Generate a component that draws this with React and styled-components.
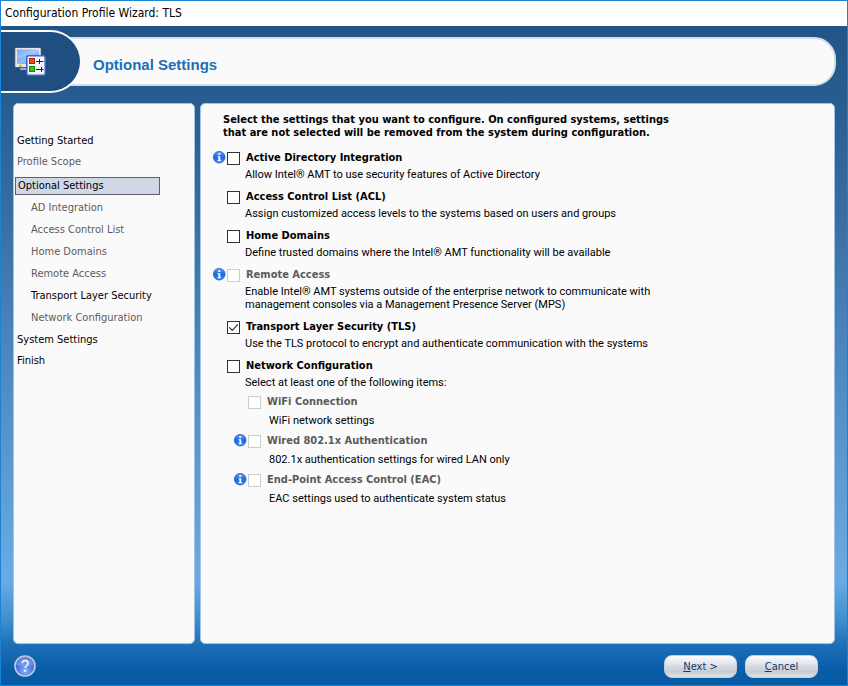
import React, { useState } from "react";
import styled, { createGlobalStyle } from "styled-components";

const GlobalStyle = createGlobalStyle`
  * { box-sizing: border-box; }
  body {
    margin: 0;
    font-family: "DejaVu Sans Condensed", "DejaVu Sans", Tahoma, sans-serif;
    font-size: 11px;
    line-height: 13px;
    color: #000;
  }
`;

const Window = styled.div`
  display: flex;
  flex-direction: column;
  min-height: 100vh;
  border: 1px solid #1883d7;
`;

const TitleBar = styled.div`
  padding: 5px 4px;
  font-size: 12px;
  line-height: 15px;
  background: #fff;
`;

const Body = styled.div`
  flex: 1;
  display: flex;
  flex-direction: column;
  background: linear-gradient(
    #225587 0%,
    #285d91 11%,
    #3b70a5 31%,
    #4a86bd 48%,
    #6aabe5 84%,
    #418fcf 90%,
    #1c6fb6 94%,
    #085ca6 98%
  );
`;

const Header = styled.header`
  display: flex;
  align-items: center;
  margin: 4px 11px 10px 0;
`;

const Badge = styled.div`
  z-index: 1;
  display: flex;
  align-items: center;
  width: 81px;
  height: 63px;
  padding-left: 13px;
  border: 2px solid #fafafa;
  border-left: 0;
  border-radius: 0 32px 32px 0;
  background: #1f4e80;
`;

const HeaderPanel = styled.div`
  flex: 1;
  height: 49px;
  margin-left: -20px;
  padding: 17px 20px 0 29px;
  border: 2px solid #d0dce9;
  border-radius: 0 22px 22px 0;
  background: #fafafa;
`;

const PageTitle = styled.h1`
  margin: 0;
  font: bold 15px/18px "Liberation Sans", Arial, sans-serif;
  color: #1b70b5;
`;

const Panels = styled.div`
  flex: 1;
  display: flex;
  gap: 5px;
  padding: 0 12px;
`;

const Panel = styled.div`
  border: 1px solid #a3c1e0;
  border-radius: 5px;
  background: #fafafa;
`;

const Sidebar = styled(Panel).attrs({ as: "nav" })`
  flex: 0 0 182px;
  padding: 26px 1px;
`;

const Steps = styled.ul`
  margin: 0;
  padding: 0;
  list-style: none;
`;

const SubSteps = styled(Steps)`
  padding-left: 14px;
`;

const Step = styled.a`
  display: block;
  padding: 0 2px;
  line-height: ${(p) => (p.$sub ? 22 : 21)}px;
  color: ${(p) => (p.$muted ? "#5c5c5c" : "#000")};
  text-decoration: none;
`;

const CurrentStep = styled(Step)`
  width: 145px;
  height: 18px;
  margin: 5px 0 2px;
  line-height: 15px;
  border: 1px solid #5d6069;
  background: #d0d8e5;
`;

const Content = styled(Panel).attrs({ as: "main" })`
  flex: 1;
  padding: 9px 12px;
`;

const Intro = styled.p`
  max-width: 470px;
  margin: 0 0 12px;
  padding-left: 10px;
  font-weight: bold;
`;

const Options = styled.div`
  display: flex;
  flex-direction: column;
  gap: ${(p) => (p.$nested ? 7 : 9)}px;
  margin: ${(p) => (p.$nested ? "6px 0 0 21px" : "0")};
`;

const OptionGrid = styled.div`
  display: grid;
  grid-template-columns: 12px 13px 1fr;
  column-gap: 2px;
  row-gap: ${(p) => (p.$nested ? 5 : 3)}px;
`;

const CheckCell = styled.span`
  display: grid;
  width: 13px;
  height: 13px;
  margin-top: 1px;
  grid-column: 2;

  > * {
    grid-area: 1 / 1;
  }
`;

const CheckBox = styled.input`
  appearance: none;
  width: 13px;
  height: 13px;
  margin: 0;
  border: 1px solid #333;
  background: #fff;

  &:disabled {
    border-color: #ccc;
  }
`;

const CheckMark = styled.svg`
  pointer-events: none;
`;

const OptionLabel = styled.label`
  padding-left: 4px;
  font-weight: bold;
  color: ${(p) => (p.$disabled ? "#5a5a5a" : "#000")};
`;

const Description = styled.p`
  grid-column: 3;
  max-width: 430px;
  margin: 0;
  padding-left: ${(p) => (p.$nested ? 6 : 3)}px;
  font-family: Roboto, Tahoma, sans-serif;
`;

const Footer = styled.footer`
  display: flex;
  align-items: flex-start;
  gap: 8px;
  padding: 11px 29px 7px 13px;
`;

const HelpButton = styled.button`
  width: 22px;
  height: 22px;
  margin-right: auto;
  padding: 0;
  border: 0;
  border-radius: 50%;
  background: none;

  svg {
    display: block;
  }
`;

const PushButton = styled.button`
  width: 73px;
  height: 23px;
  padding: 0;
  border: 1px solid #c5d0dd;
  border-radius: 8px;
  background: linear-gradient(#fbfcfd 0%, #e3e6ea 35%, #d2d7dd 55%, #c6ccd3 75%, #dfe4ea 100%);
  color: #0b3c70;
  font: inherit;
`;

const ProfileIcon = () => (
  <svg width="33" height="31" viewBox="0 0 33 31" aria-hidden="true">
    <defs>
      <linearGradient id="screen" x1="0" y1="0" x2="1" y2="1">
        <stop offset="0" stopColor="#3d83ee" />
        <stop offset="0.5" stopColor="#8fc0fb" />
        <stop offset="1" stopColor="#4c8df0" />
      </linearGradient>
    </defs>
    <path d="M6 22h10v2H6z" fill="#c9cbd0" stroke="#62656c" strokeWidth="0.6" />
    <rect x="0.8" y="1.5" width="26.4" height="20" rx="1.3" fill="#e8e8e8" stroke="#3c4654" strokeWidth="0.8" />
    <rect x="3" y="3.6" width="22" height="14.4" fill="url(#screen)" />
    <path d="M3 3.6h22v3Q13 8 3 14z" fill="#c3dcfd" opacity="0.45" />
    <circle cx="6.5" cy="19.8" r="1" fill="#39d31b" />
    <rect x="12.8" y="9.8" width="18.4" height="19.4" rx="1.8" fill="#f3f5fb" stroke="#4763c4" strokeWidth="1.6" />
    <rect x="15.5" y="12.5" width="5" height="5" fill="#ee4a20" stroke="#a3260c" />
    <rect x="15.5" y="20.5" width="5" height="5" fill="#2fc914" stroke="#168a0a" />
    <path d="M22 15.5h7.5M25.5 13v5M22 23.5h7.5M27.5 21v5" stroke="#222" />
  </svg>
);

const InfoIcon = () => (
  <svg width="13" height="13" viewBox="0 0 13 13" role="img" aria-label="Information">
    <defs>
      <linearGradient id="info" x1="0" y1="0" x2="0" y2="1">
        <stop offset="0" stopColor="#62a3f8" />
        <stop offset="0.5" stopColor="#1d68e6" />
        <stop offset="1" stopColor="#2f8bf7" />
      </linearGradient>
    </defs>
    <circle cx="6.2" cy="6.2" r="5.8" fill="url(#info)" stroke="#1f55c8" strokeWidth="0.8" />
    <path d="M5.3 2.3h2v1.8h-2zM4.5 5.2h2.8v4H8.2v1H4.5v-1h.9v-3h-.9z" fill="#fff" />
  </svg>
);

const HelpIcon = () => (
  <svg width="22" height="22" viewBox="0 0 22 22" aria-hidden="true">
    <defs>
      <radialGradient id="help" cx="0.5" cy="0.75" r="0.7">
        <stop offset="0" stopColor="#86b4f8" />
        <stop offset="0.55" stopColor="#4a78e4" />
        <stop offset="1" stopColor="#3d60cf" />
      </radialGradient>
    </defs>
    <circle cx="11" cy="11" r="10" fill="url(#help)" stroke="#c3c9d6" strokeWidth="1.6" />
    <path d="M2.8 10a8.2 8.2 0 0 1 16.4 0Q11 12.5 2.8 10z" fill="#fff" opacity="0.22" />
    <path
      d="M8.2 8.2Q8.4 5.6 11.2 5.6T14 8.2Q14 9.6 12.6 10.6T11.2 13"
      fill="none"
      stroke="#f2f4fb"
      strokeWidth="1.7"
    />
    <circle cx="11.1" cy="15.7" r="1.2" fill="#f2f4fb" />
  </svg>
);

function Option({ id, title, text, info, disabled, checked, onToggle, nested, children }) {
  return (
    <div>
      <OptionGrid $nested={nested}>
        {info && <InfoIcon />}
        <CheckCell>
          <CheckBox
            type="checkbox"
            id={id}
            disabled={disabled}
            checked={checked}
            onChange={() => onToggle(id)}
            aria-describedby={`${id}-text`}
          />
          {checked && (
            <CheckMark width="13" height="13" viewBox="0 0 13 13" aria-hidden="true">
              <path d="M2.3 6.3 5.2 9.3 10.9 3.4" fill="none" stroke="#333" strokeWidth="1.2" />
            </CheckMark>
          )}
        </CheckCell>
        <OptionLabel htmlFor={id} $disabled={disabled}>
          {title}
        </OptionLabel>
        <Description id={`${id}-text`} $nested={nested}>
          {text}
        </Description>
      </OptionGrid>
      {children}
    </div>
  );
}

const subSteps = [
  ["AD Integration", true],
  ["Access Control List", true],
  ["Home Domains", true],
  ["Remote Access", true],
  ["Transport Layer Security", false],
  ["Network Configuration", true],
];

const options = [
  { id: "ad", title: "Active Directory Integration", text: "Allow Intel® AMT to use security features of Active Directory", info: true },
  { id: "acl", title: "Access Control List (ACL)", text: "Assign customized access levels to the systems based on users and groups" },
  { id: "domains", title: "Home Domains", text: "Define trusted domains where the Intel® AMT functionality will be available" },
  {
    id: "remote",
    title: "Remote Access",
    text: "Enable Intel® AMT systems outside of the enterprise network to communicate with management consoles via a Management Presence Server (MPS)",
    info: true,
    disabled: true,
  },
  { id: "tls", title: "Transport Layer Security (TLS)", text: "Use the TLS protocol to encrypt and authenticate communication with the systems" },
];

const networkOptions = [
  { id: "wifi", title: "WiFi Connection", text: "WiFi network settings" },
  { id: "wired", title: "Wired 802.1x Authentication", text: "802.1x authentication settings for wired LAN only", info: true },
  { id: "eac", title: "End-Point Access Control (EAC)", text: "EAC settings used to authenticate system status", info: true },
];

export default function App() {
  const [selected, setSelected] = useState({ tls: true });
  const toggle = (id) => setSelected((s) => ({ ...s, [id]: !s[id] }));

  return (
    <Window>
      <GlobalStyle />
      <TitleBar>Configuration Profile Wizard: TLS</TitleBar>
      <Body>
        <Header>
          <Badge>
            <ProfileIcon />
          </Badge>
          <HeaderPanel>
            <PageTitle>Optional Settings</PageTitle>
          </HeaderPanel>
        </Header>
        <Panels>
          <Sidebar>
            <Steps>
              <li><Step href="#start">Getting Started</Step></li>
              <li><Step href="#scope" $muted>Profile Scope</Step></li>
              <li>
                <CurrentStep href="#optional" aria-current="step">Optional Settings</CurrentStep>
                <SubSteps>
                  {subSteps.map(([name, muted]) => (
                    <li key={name}>
                      <Step href="#optional" $sub $muted={muted}>{name}</Step>
                    </li>
                  ))}
                </SubSteps>
              </li>
              <li><Step href="#system">System Settings</Step></li>
              <li><Step href="#finish">Finish</Step></li>
            </Steps>
          </Sidebar>
          <Content>
            <Intro>
              Select the settings that you want to configure. On configured systems, settings that are not
              selected will be removed from the system during configuration.
            </Intro>
            <Options>
              {options.map((o) => (
                <Option key={o.id} {...o} checked={!!selected[o.id]} onToggle={toggle} />
              ))}
              <Option
                id="network"
                title="Network Configuration"
                text="Select at least one of the following items:"
                checked={!!selected.network}
                onToggle={toggle}
              >
                <Options $nested>
                  {networkOptions.map((o) => (
                    <Option
                      key={o.id}
                      {...o}
                      nested
                      disabled={!selected.network}
                      checked={!!selected[o.id]}
                      onToggle={toggle}
                    />
                  ))}
                </Options>
              </Option>
            </Options>
          </Content>
        </Panels>
        <Footer>
          <HelpButton type="button" aria-label="Help">
            <HelpIcon />
          </HelpButton>
          <PushButton type="button"><u>N</u>ext &gt;</PushButton>
          <PushButton type="button"><u>C</u>ancel</PushButton>
        </Footer>
      </Body>
    </Window>
  );
}
